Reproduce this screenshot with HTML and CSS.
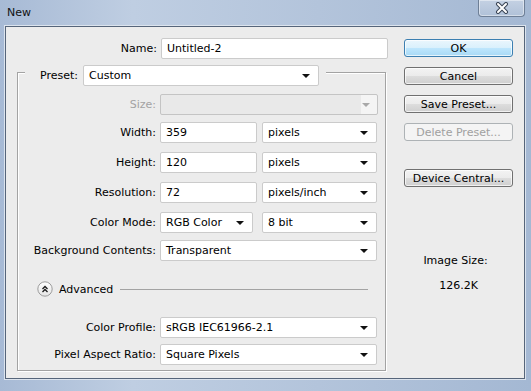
FILE: index.html
```html
<!DOCTYPE html>
<html lang="en">
<head>
  <meta charset="UTF-8" />
  <title>New</title>
  <link rel="stylesheet" href="styles.css">
</head>
<body>
  <div class="window">
    <div class="titlebar">
      <span class="title">New</span>
      <div class="close">
        <svg width="20" height="12" viewBox="0 0 20 12">
          <path d="M6 2 L14 10 M14 2 L6 10" stroke="#3a4556" stroke-width="4" stroke-linecap="round" />
          <path d="M6 2 L14 10 M14 2 L6 10" stroke="#ffffff" stroke-width="2" stroke-linecap="round" />
        </svg>
      </div>
    </div>

    <div class="client">
      <div class="form">
        <div class="row name-row">
          <label>Name:</label>
          <div class="field wide-name">Untitled-2</div>
        </div>

        <div class="group">
          <div class="legend">
            <label>Preset:</label>
            <div class="select preset"><span>Custom</span><i class="arrow"></i></div>
          </div>

          <div class="row r-size">
            <label class="disabled">Size:</label>
            <div class="select full off"><span></span><i class="arrow"></i></div>
          </div>
          <div class="row r-width">
            <label>Width:</label>
            <div class="field num">359</div>
            <div class="select unit"><span>pixels</span><i class="arrow"></i></div>
          </div>
          <div class="row r-gap9">
            <label>Height:</label>
            <div class="field num">120</div>
            <div class="select unit"><span>pixels</span><i class="arrow"></i></div>
          </div>
          <div class="row r-gap9">
            <label>Resolution:</label>
            <div class="field num">72</div>
            <div class="select unit"><span>pixels/inch</span><i class="arrow"></i></div>
          </div>
          <div class="row r-gap9">
            <label>Color Mode:</label>
            <div class="select mode"><span>RGB Color</span><i class="arrow"></i></div>
            <div class="select unit"><span>8 bit</span><i class="arrow"></i></div>
          </div>
          <div class="row r-width">
            <label>Background Contents:</label>
            <div class="select full"><span>Transparent</span><i class="arrow"></i></div>
          </div>

          <div class="advanced">
            <svg class="adv-icon" width="16" height="16" viewBox="0 0 16 16">
              <defs>
                <linearGradient id="advg" x1="0" y1="0" x2="0" y2="1">
                  <stop offset="0" stop-color="#ffffff" />
                  <stop offset="1" stop-color="#e4e4e4" />
                </linearGradient>
              </defs>
              <circle cx="8" cy="8" r="7.2" fill="url(#advg)" stroke="#9c9c9c" />
              <path d="M5.5 8 L8 5.5 L10.5 8 M5.5 11 L8 8.5 L10.5 11" fill="none" stroke="#1a1a1a" stroke-width="1.3" />
            </svg>
            <span>Advanced</span>
            <div class="rule"></div>
          </div>

          <div class="row r-profile">
            <label>Color Profile:</label>
            <div class="select full"><span>sRGB IEC61966-2.1</span><i class="arrow"></i></div>
          </div>
          <div class="row r-aspect">
            <label>Pixel Aspect Ratio:</label>
            <div class="select full"><span>Square Pixels</span><i class="arrow"></i></div>
          </div>
        </div>
      </div>

      <div class="side">
        <button class="btn default">OK</button>
        <button class="btn">Cancel</button>
        <button class="btn">Save Preset...</button>
        <button class="btn" disabled>Delete Preset...</button>
        <button class="btn device">Device Central...</button>
        <div class="size-title">Image Size:</div>
        <div class="size-value">126.2K</div>
      </div>
    </div>
  </div>
</body>
</html>
```

FILE: styles.css
```css
body {
  margin: 0;
  font-family: 'DejaVu Sans', sans-serif;
  font-size: 11px;
  color: #000;
}

.window {
  width: 531px;
  height: 391px;
  background: linear-gradient(to right, #a7bad5 0%, #bfcee2 25%, #b3c4db 60%, #a4b8d3 100%);
  display: flex;
  flex-direction: column;
  overflow: hidden;
}

.titlebar {
  height: 26px;
  display: flex;
  align-items: flex-start;
  justify-content: space-between;
}

.title {
  margin: 6px 0 0 7px;
  font-size: 11px;
  color: #111;
}

.close {
  width: 47px;
  height: 17px;
  margin-right: 6px;
  border: 1px solid #6e7f96;
  border-top: none;
  border-radius: 0 0 4px 4px;
  background: linear-gradient(#c4d1e3, #b0c1d8);
  box-shadow: inset 0 0 0 1px rgba(255, 255, 255, 0.45);
  display: flex;
  align-items: center;
  justify-content: center;
  box-sizing: border-box;
}

.client {
  margin-left: 5px;
  width: 520px;
  height: 353px;
  box-sizing: border-box;
  background: #ececec;
  border: 1px solid #56657a;
  box-shadow: 0 0 0 1px #dce4ee;
  display: flex;
}

.form {
  width: 382px;
  flex: none;
}

.row {
  display: flex;
  align-items: center;
  height: 21px;
}

.row label {
  width: 138px;
  margin-right: 4px;
  text-align: right;
  flex: none;
}

.name-row {
  margin-top: 11px;
  padding-left: 12px;
}

.name-row label {
  width: 139px;
}

label.disabled {
  color: #a3a3a3;
}

.field,
.select {
  height: 21px;
  box-sizing: border-box;
  background: #fff;
  border: 1px solid #cbcbcb;
  border-radius: 2px;
  padding: 0 5px;
  display: flex;
  align-items: center;
  color: #000;
}

.wide-name { width: 227px; }
.num { width: 97px; margin-right: 5px; }
.unit { width: 115px; }
.mode { width: 93px; margin-right: 9px; }
.full { width: 217px; }
.select.full.off { width: 218px; }

.select span {
  flex: 1;
  white-space: nowrap;
}

.arrow {
  width: 0;
  height: 0;
  border-left: 4px solid transparent;
  border-right: 4px solid transparent;
  border-top: 4px solid #111;
  margin-right: 3px;
  margin-top: 1px;
}

.select.off {
  background: linear-gradient(to right, #e9e9e9 0, #e9e9e9 200px, #f4f4f4 200px);
  border-color: #c4c4c4;
  padding-right: 4px;
}

.select.off .arrow {
  border-top-color: #a8a8a8;
}

.group {
  margin: 13px 0 0 11px;
  width: 369px;
  height: 299px;
  box-sizing: border-box;
  border: 1px solid #a3a3a3;
  box-shadow: 1px 1px 0 #fff, inset 1px 1px 0 #fff;
}

.legend {
  display: flex;
  align-items: center;
  margin: -8px 0 0 7px;
  width: 301px;
  background: #ececec;
}

.legend label {
  width: 53px;
  margin-right: 5px;
  text-align: right;
}

.preset { width: 236px; }

.r-size { margin-top: 8px; }
.r-width { margin-top: 7px; }
.r-gap9 { margin-top: 9px; }
.r-profile { margin-top: 20px; }
.r-aspect { margin-top: 6px; }

.advanced {
  margin-top: 20px;
  height: 16px;
  display: flex;
  align-items: center;
  padding-left: 19px;
}

.adv-icon {
  flex: none;
  margin-right: 6px;
}

.rule {
  width: 248px;
  height: 1px;
  background: #a3a3a3;
  margin-left: 7px;
}

.side {
  padding: 12px 0 0 16px;
  display: flex;
  flex-direction: column;
  width: 109px;
}

.btn {
  width: 109px;
  height: 18px;
  margin-bottom: 10px;
  padding: 0;
  font-family: 'DejaVu Sans', sans-serif;
  font-size: 11px;
  color: #000;
  border: 1px solid #707070;
  border-radius: 3px;
  background: linear-gradient(#f3f3f3 0%, #ebebeb 50%, #dddddd 51%, #cfcfcf 100%);
  box-shadow: inset 0 0 0 1px rgba(255, 255, 255, 0.7);
}

.btn.default {
  border-color: #3c7fb1;
  background: linear-gradient(#eaf6fd 0%, #d9f0fc 50%, #bee6fd 51%, #a7d9f5 100%);
}

.btn:disabled {
  color: #a0a0a0;
  border-color: #adb2b5;
  background: #f4f4f4;
  box-shadow: none;
}

.btn.device {
  margin-top: 18px;
}

.size-title {
  margin-top: 57px;
  text-align: center;
  padding-right: 6px;
}

.size-value {
  margin-top: 12px;
  text-align: center;
}
```
